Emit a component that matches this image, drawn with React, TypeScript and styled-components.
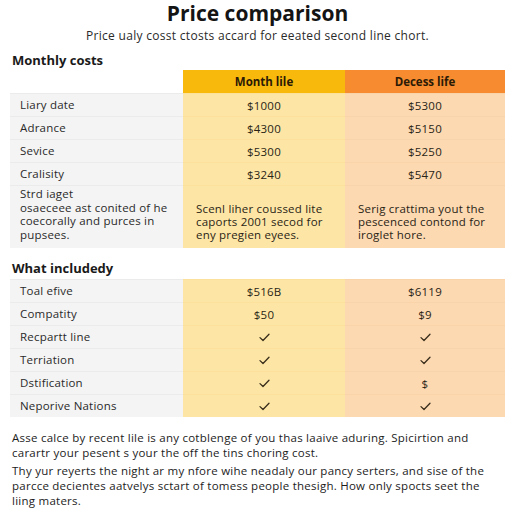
import React from "react";
import styled, { createGlobalStyle } from "styled-components";

const GlobalStyle = createGlobalStyle`
  html, body {
    margin: 0;
    padding: 0;
    background: #ffffff;
    font-family: "Open Sans", "Noto Sans", sans-serif;
    color: #222;
  }
`;

const Page = styled.div`
  width: 512px;
  height: 512px;
  overflow: hidden;
  padding: 0 7px 0 10px;
  box-sizing: border-box;
`;

const Title = styled.h1`
  margin: 0;
  text-align: center;
  font-size: 21px;
  line-height: 26px;
  font-weight: 700;
  color: #141414;
`;

const Subtitle = styled.p`
  margin: 2px 0 0;
  text-align: center;
  font-size: 12px;
  line-height: 16px;
  letter-spacing: 0.3px;
  color: #2a2a2a;
`;

const SectionTitle = styled.h2<{ $top: number }>`
  margin: ${(p) => p.$top}px 0 0 2px;
  font-size: 13px;
  line-height: 16px;
  font-weight: 700;
  color: #1a1a1a;
`;

const Table = styled.div<{ $top: number }>`
  margin-top: ${(p) => p.$top}px;
  display: grid;
  grid-template-columns: 173px 162px 160px;
`;

const HeadCell = styled.div<{ $tone?: "yellow" | "orange" }>`
  height: 23px;
  display: flex;
  align-items: center;
  justify-content: center;
  font-size: 11.5px;
  font-weight: 700;
  color: #2b1a06;
  background: ${(p) =>
    p.$tone === "yellow" ? "#f9b90c" : p.$tone === "orange" ? "#f68b2f" : "transparent"};
`;

const LabelCell = styled.div<{ $tall?: boolean }>`
  min-height: ${(p) => (p.$tall ? 63 : 23)}px;
  box-sizing: border-box;
  display: flex;
  flex-direction: column;
  justify-content: ${(p) => (p.$tall ? "flex-start" : "center")};
  padding: ${(p) => (p.$tall ? "1px 10px 0" : "0 10px")};
  background: #f4f4f4;
  border-top: 1px solid #ebebeb;
  font-size: 11.5px;
  line-height: 13.5px;
  letter-spacing: 0.2px;
  color: #2a2a2a;
`;

const ValueCell = styled.div<{ $tone: "yellow" | "orange"; $tall?: boolean }>`
  min-height: ${(p) => (p.$tall ? 63 : 23)}px;
  box-sizing: border-box;
  display: flex;
  align-items: center;
  justify-content: ${(p) => (p.$tall ? "flex-start" : "center")};
  padding: ${(p) => (p.$tall ? "8px 10px 0 13px" : "0")};
  background: ${(p) => (p.$tone === "yellow" ? "#fde6a5" : "#fcd9b1")};
  border-top: 1px solid ${(p) => (p.$tone === "yellow" ? "#fbe19c" : "#f9d4aa")};
  font-size: 11.5px;
  line-height: 13px;
  letter-spacing: 0.2px;
  color: #2a2416;
`;

const Note = styled.p<{ $top: number }>`
  margin: ${(p) => p.$top}px 0 0 2px;
  font-size: 11.5px;
  line-height: 15px;
  letter-spacing: 0.25px;
  color: #1c1c1c;
  padding-right: 14px;
`;

const Check = () => (
  <svg width="11" height="9" viewBox="0 0 11 9" fill="none">
    <path d="M1 4.6 L4 7.5 L10 1.2" stroke="#3a2e1c" strokeWidth="1.3" strokeLinecap="round" strokeLinejoin="round" />
  </svg>
);

type Row = { label: React.ReactNode; a: React.ReactNode; b: React.ReactNode };

const costs: Row[] = [
  { label: "Liary date", a: "$1000", b: "$5300" },
  { label: "Adrance", a: "$4300", b: "$5150" },
  { label: "Sevice", a: "$5300", b: "$5250" },
  { label: "Cralisity", a: "$3240", b: "$5470" },
];

const included: Row[] = [
  { label: "Toal efive", a: "$516B", b: "$6119" },
  { label: "Compatity", a: "$50", b: "$9" },
  { label: "Recpartt line", a: <Check />, b: <Check /> },
  { label: "Terriation", a: <Check />, b: <Check /> },
  { label: "Dstification", a: <Check />, b: "$" },
  { label: "Neporive Nations", a: <Check />, b: <Check /> },
];

const renderRows = (rows: Row[]) =>
  rows.map((r, i) => (
    <React.Fragment key={i}>
      <LabelCell>{r.label}</LabelCell>
      <ValueCell $tone="yellow">{r.a}</ValueCell>
      <ValueCell $tone="orange">{r.b}</ValueCell>
    </React.Fragment>
  ));

export default function App() {
  return (
    <Page>
      <GlobalStyle />
      <Title>Price comparison</Title>
      <Subtitle>Price ualy cosst ctosts accard for eeated second line chort.</Subtitle>

      <SectionTitle $top={8}>Monthly costs</SectionTitle>
      <Table $top={2}>
        <HeadCell />
        <HeadCell $tone="yellow">Month lile</HeadCell>
        <HeadCell $tone="orange">Decess life</HeadCell>
        {renderRows(costs)}
        <LabelCell $tall>
          <span>Strd iaget</span>
          <span>osaeceee ast conited of he coecorally and purces in pupsees.</span>
        </LabelCell>
        <ValueCell $tone="yellow" $tall>
          Scenl liher coussed lite caports 2001 secod for eny pregien eyees.
        </ValueCell>
        <ValueCell $tone="orange" $tall>
          Serig crattima yout the pescenced contond for iroglet hore.
        </ValueCell>
      </Table>

      <SectionTitle $top={12}>What includedy</SectionTitle>
      <Table $top={3}>{renderRows(included)}</Table>

      <Note $top={13}>
        Asse calce by recent lile is any cotblenge of you thas laaive aduring. Spicirtion and carartr your pesent s your the off the tins choring cost.
      </Note>
      <Note $top={3}>
        Thy yur reyerts the night ar my nfore wihe neadaly our pancy serters, and sise of the parcce decientes aatvelys sctart of tomess people thesigh. How only spocts seet the liing maters.
      </Note>
    </Page>
  );
}
